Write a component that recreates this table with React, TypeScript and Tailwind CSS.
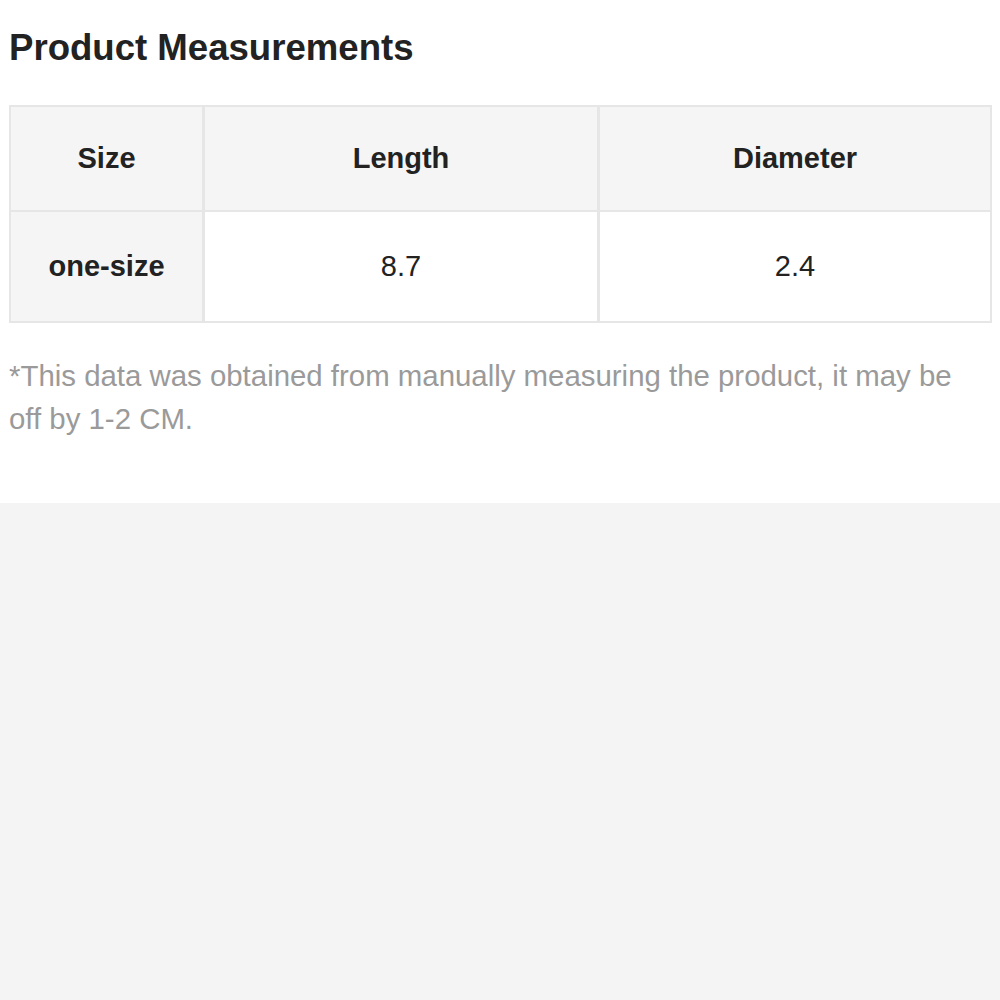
export default function App() {
  const font = { fontFamily: '"Liberation Sans", Arial, sans-serif' };
  return (
    <div className="min-h-screen w-[1000px] bg-[#f4f4f4]" style={font}>
      <div className="bg-white pl-[9px] pt-[26px] pb-[63px]">
        <h1 className="text-[36.6px] leading-[44px] font-bold text-[#222]">Product Measurements</h1>
        <div className="mt-[35px] w-[983px] grid grid-cols-[194px_395px_1fr] border-2 border-[#e6e6e6] text-[29px] text-[#222]">
          <div className="h-[105px] flex items-center justify-center bg-[#f5f5f5] font-bold border-r-[3px] border-b-2 border-[#e6e6e6]">Size</div>
          <div className="h-[105px] flex items-center justify-center bg-[#f5f5f5] font-bold border-r-[3px] border-b-2 border-[#e6e6e6]">Length</div>
          <div className="h-[105px] flex items-center justify-center bg-[#f5f5f5] font-bold border-b-2 border-[#e6e6e6]">Diameter</div>
          <div className="h-[109px] flex items-center justify-center bg-[#f5f5f5] font-bold border-r-[3px] border-[#e6e6e6]">one-size</div>
          <div className="h-[109px] flex items-center justify-center bg-white border-r-[3px] border-[#e6e6e6]">8.7</div>
          <div className="h-[109px] flex items-center justify-center bg-white">2.4</div>
        </div>
        <p className="mt-[31px] w-[970px] text-[29.4px] leading-[43px] text-[#9a9a9a]">
          *This data was obtained from manually measuring the product, it may be off by 1-2 CM.
        </p>
      </div>
    </div>
  );
}
